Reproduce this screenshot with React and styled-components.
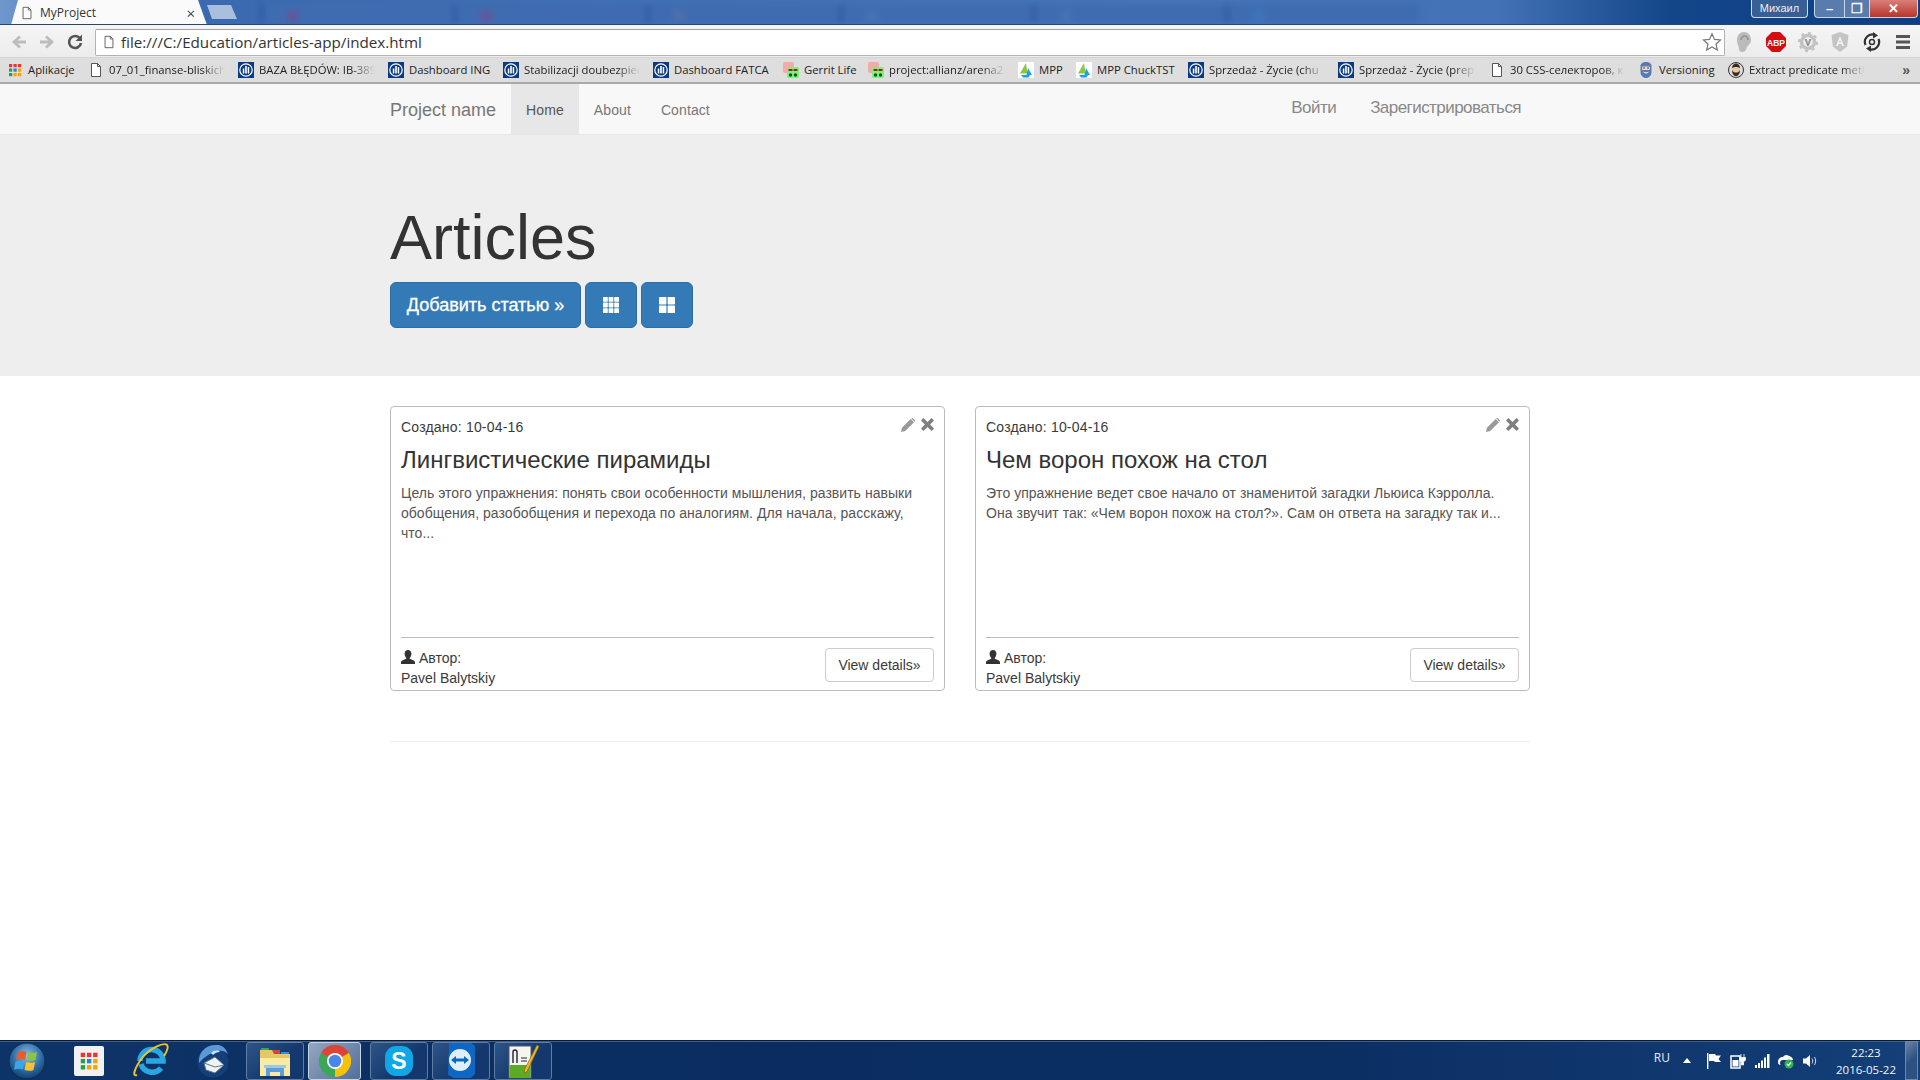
import React from "react"
import styled, { createGlobalStyle } from 'styled-components'

const GlobalStyle = createGlobalStyle`
  html, body { margin: 0; height: 100%; overflow: hidden; background: #fff; }
  body {
    font-family: "Liberation Sans", Arial, sans-serif;
    font-size: 14px;
    line-height: 20px;
    color: #3a3a3a;
  }
  * { box-sizing: border-box; }
`

const UI_FONT = `"Open Sans", "Noto Sans", sans-serif`

/* ---------- glyphs ---------- */

const Th = () => (
  <svg width="16" height="16" viewBox="0 0 16 16" fill="#fff">
    {[0, 1, 2].map(r => [0, 1, 2].map(c => (
      <rect key={`${r}${c}`} x={c * 5.6} y={r * 5.6} width="4.8" height="4.8" rx="0.6" />
    )))}
  </svg>
)

const ThLarge = () => (
  <svg width="16" height="16" viewBox="0 0 16 16" fill="#fff">
    <rect x="0" y="0" width="7.4" height="7.4" rx="0.6" />
    <rect x="8.6" y="0" width="7.4" height="7.4" rx="0.6" />
    <rect x="0" y="8.6" width="7.4" height="7.4" rx="0.6" />
    <rect x="8.6" y="8.6" width="7.4" height="7.4" rx="0.6" />
  </svg>
)

const Pencil = () => (
  <svg width="14" height="14" viewBox="0 0 14 14" fill="#999">
    <path d="M0 14l.9-4.2L9.7 1l3.3 3.3-8.8 8.8zM10.5.3c.5-.4 1.1-.4 1.5 0l1.7 1.7c.4.4.4 1 0 1.5l-.2.2L10.3.5z" />
  </svg>
)

const Cross = () => (
  <svg width="13" height="13" viewBox="0 0 13 13" fill="#808080">
    <path d="M3 .4L6.5 3.9 10 .4c.3-.3.8-.3 1.1 0l1.5 1.5c.3.3.3.8 0 1.1L9.1 6.5l3.5 3.5c.3.3.3.8 0 1.1l-1.5 1.5c-.3.3-.8.3-1.1 0L6.5 9.1 3 12.6c-.3.3-.8.3-1.1 0L.4 11.1c-.3-.3-.3-.8 0-1.1l3.5-3.5L.4 3c-.3-.3-.3-.8 0-1.1L1.9.4C2.2.1 2.7.1 3 .4z" />
  </svg>
)

const UserGlyph = () => (
  <svg width="14" height="14" viewBox="0 0 14 14" fill="#333">
    <path d="M7 0c2.1 0 3.4 1.5 3.4 3.7 0 1.6-.7 3.2-1.5 4.1-.3.4-.2 1 .3 1.2 1.9.8 4.8 1.5 4.8 3.4V14H0v-1.6c0-1.9 2.9-2.6 4.8-3.4.5-.2.6-.8.3-1.2-.8-.9-1.5-2.5-1.5-4.1C3.6 1.5 4.9 0 7 0z" />
  </svg>
)

const PageIcon = ({ size = 16 }) => (
  <svg width={size} height={size} viewBox="0 0 16 16">
    <path d="M3.5 1.5h6l3 3v10h-9z" fill="#fff" stroke="#555" />
    <path d="M9.5 1.5v3h3" fill="none" stroke="#555" />
  </svg>
)

const Allianz = () => (
  <svg width="16" height="16" viewBox="0 0 16 16">
    <rect width="16" height="16" fill="#0a3a82" />
    <circle cx="8" cy="8" r="6.2" fill="none" stroke="#fff" strokeWidth="1.2" />
    <rect x="4.8" y="6.5" width="1.5" height="5" fill="#fff" />
    <rect x="7.2" y="4" width="1.6" height="7.5" fill="#fff" />
    <rect x="9.7" y="5" width="1.5" height="6.5" fill="#fff" />
  </svg>
)

const Gerrit = () => (
  <svg width="16" height="16" viewBox="0 0 16 16">
    <rect x="0" y="0" width="11" height="11" rx="2" fill="#f7a8a8" />
    <rect x="4" y="5" width="12" height="11" rx="1.5" fill="#7df07d" />
    <rect x="5.5" y="7" width="4" height="2" fill="#a32020" />
    <rect x="10.5" y="7" width="4" height="2" fill="#a32020" />
    <circle cx="7.5" cy="13" r="1.7" fill="#0c5a0c" />
    <circle cx="12.5" cy="13" r="1.7" fill="#0c5a0c" />
  </svg>
)

const Mpp = () => (
  <svg width="16" height="16" viewBox="0 0 16 16">
    <rect width="16" height="16" fill="#fff" />
    <path d="M8 1l1.5 10.5H2z" fill="#8cc63f" />
    <path d="M10 6l4 7-5.5 0z" fill="#1ba1e2" />
    <path d="M3 13h9l-1.5 2.5H5z" fill="#1ba1e2" />
  </svg>
)

const Bearded = () => (
  <svg width="16" height="16" viewBox="0 0 16 16">
    <path d="M2.5 4C2.5 1.5 5 0 8 0s5.5 1.5 5.500 4v6c0 3.500-2.500 6-5.500 6s-5.500-2.500-5.500-6z" fill="#5a78b5" />
    <rect x="4" y="4.5" width="8" height="3.5" rx="1" fill="#f0d9c0" />
    <circle cx="6" cy="6" r=".8" fill="#234" />
    <circle cx="10" cy="6" r=".8" fill="#234" />
    <path d="M5.5 10c1.5 1.2 3.5 1.2 5 0" stroke="#fff" fill="none" />
  </svg>
)

const Face = () => (
  <svg width="16" height="16" viewBox="0 0 16 16">
    <circle cx="8" cy="8" r="7.5" fill="#ddd" stroke="#333" />
    <ellipse cx="8" cy="7" rx="3.8" ry="4.2" fill="#e8c9a8" />
    <path d="M4 8c0 4 2 6 4 6s4-2 4-6c-1 2-2 2.5-4 2.5S5 10 4 8z" fill="#3a2a20" />
    <path d="M4 6c0-3 2-4.500 4-4.500S12 3 12 6C10 4.500 6 4.500 4 6z" fill="#3a2a20" />
  </svg>
)

const AppsGrid = ({ size = 16 }) => {
  const colours = ['#e33', '#e33', '#e33', '#2a9d4a', '#2b7fd6', '#f5a300', '#2a9d4a', '#f5a300', '#f5a300']
  return (
    <svg width={size} height={size} viewBox="0 0 16 16">
      {colours.map((c, i) => (
        <rect key={i} x={2 + (i % 3) * 4.5} y={2 + Math.floor(i / 3) * 4.5} width="3.2" height="3.2" fill={c} />
      ))}
    </svg>
  )
}

const bookmarkIcons = { apps: AppsGrid, page: PageIcon, allianz: Allianz, gerrit: Gerrit, mpp: Mpp, beard: Bearded, face: Face }

const Back = ({ colour }) => (
  <svg width="18" height="18" viewBox="0 0 18 18" fill={colour}>
    <path d="M9 2.5l2 2L7.500 7.500H16v3H7.500l3.500 3-2 2L2 9z" />
  </svg>
)

const Forward = ({ colour }) => (
  <svg width="18" height="18" viewBox="0 0 18 18" fill={colour}>
    <path d="M9 2.5l-2 2 3.500 3H2v3h8.500L7 13.500l2 2L16 9z" />
  </svg>
)

const Reload = () => (
  <svg width="18" height="18" viewBox="0 0 18 18">
    <path d="M14 5.500A6 6 0 1 0 15 10" fill="none" stroke="#555" strokeWidth="2.6" />
    <path d="M16 1.500v6.500H9.500z" fill="#555" />
  </svg>
)

const Star = () => (
  <svg width="20" height="20" viewBox="0 0 20 20">
    <path d="M10 1.800l2.500 5.600 6 .6-4.500 4 1.300 6L10 15l-5.300 3 1.300-6-4.500-4 6-.6z" fill="#fff" stroke="#777" strokeWidth="1.2" />
  </svg>
)

const Ear = () => (
  <svg width="20" height="22" viewBox="0 0 20 22">
    <path d="M3 9c0-5 3-8 7-8s7 3 7 8c0 4-3 5-4 7-1 3-2 5-5 5-2 0-3-1-3-3 0-4-2-4-2-9z" fill="#bbb" />
    <path d="M7 9c0-2 1.500-4 3.500-4S14 7 14 9" fill="none" stroke="#8d8d8d" strokeWidth="1.5" />
  </svg>
)

const Abp = () => (
  <svg width="20" height="20" viewBox="0 0 20 20">
    <path d="M6 0h8l6 6v8l-6 6H6l-6-6V6z" fill="#d40d12" />
    <text x="10" y="13.5" textAnchor="middle" fontFamily="Liberation Sans" fontWeight="700" fontSize="8.5" fill="#fff">ABP</text>
  </svg>
)

const Gear = () => (
  <svg width="20" height="20" viewBox="0 0 20 20">
    <circle cx="10" cy="10" r="6.5" fill="none" stroke="#c2c2c2" strokeWidth="3.5" />
    <circle cx="10" cy="10" r="9" fill="none" stroke="#c2c2c2" strokeWidth="2" strokeDasharray="3 4" />
    <path d="M6.500 7h2.200l1.300 4 1.300-4h2.200L10.800 14H9.200z" fill="#999" />
  </svg>
)

const Shield = () => (
  <svg width="20" height="20" viewBox="0 0 20 20">
    <path d="M10 0l8.500 3-1.300 11.500L10 20l-7.200-5.500L1.500 3z" fill="#c4c4c4" />
    <path d="M10 4L6 14h1.800l.8-2h2.800l.8 2H14zM9.200 10.500L10 8l.8 2.500z" fill="#f3f3f3" />
  </svg>
)

const SyncIcon = () => (
  <svg width="20" height="20" viewBox="0 0 20 20">
    <path d="M3.500 13A7.500 7.500 0 0 1 13 3" fill="none" stroke="#333" strokeWidth="2.2" />
    <path d="M16.500 7A7.500 7.500 0 0 1 7 17" fill="none" stroke="#333" strokeWidth="2.2" />
    <path d="M11 0l5 3.500-5 3zM9 20l-5-3.500 5-3z" fill="#333" />
    <circle cx="10" cy="10" r="2.5" fill="none" stroke="#333" strokeWidth="1.5" />
  </svg>
)

const Menu = () => (
  <svg width="16" height="16" viewBox="0 0 16 16" fill="#555">
    <rect y="1" width="14" height="3" />
    <rect y="6.5" width="14" height="3" />
    <rect y="12" width="14" height="3" />
  </svg>
)

/* taskbar drawings */

const StartOrb = () => (
  <svg width="38" height="38" viewBox="0 0 38 38">
    <defs>
      <radialGradient id="orb" cx="50%" cy="35%" r="65%">
        <stop offset="0" stopColor="#8fc4e8" />
        <stop offset=".6" stopColor="#2f6ea8" />
        <stop offset="1" stopColor="#123f70" />
      </radialGradient>
    </defs>
    <circle cx="19" cy="19" r="18" fill="url(#orb)" stroke="#0d2b50" />
    <path d="M10 10c3-1.500 5-1 8.500 0l-1.500 8c-3-1-5.500-1.500-9-.2z" fill="#ea5a2b" />
    <path d="M20 10.500c3 1 5 1 9-.4L27.500 18c-3 1.200-5.500 1-9 0z" fill="#8cc53f" />
    <path d="M7.500 19.500c3-1.300 5.500-.8 9 .2L15 27.500c-3-1-5.500-1.200-9 .2z" fill="#3ba5e6" />
    <path d="M18 20c3 1 5.500 1.200 9 0L25.500 28c-3 1.200-5.500 1-9 0z" fill="#fbc02d" />
  </svg>
)

const IeIcon = () => (
  <svg width="38" height="36" viewBox="0 0 38 36">
    <path d="M8 18a11.500 11.500 0 0 1 23 0H14M14 18h12M29 25a11.500 11.500 0 0 1-20-4" fill="none" stroke="#2ba6e3" strokeWidth="5.5" />
    <path d="M5 32C0 34 2 26 10 15 18 5 32-1 35 2c2 2.500-.5 7-3 11" fill="none" stroke="#eec32f" strokeWidth="2" />
  </svg>
)

const BirdIcon = () => (
  <svg width="34" height="36" viewBox="0 0 34 36">
    <circle cx="17" cy="19" r="15.5" fill="#153f78" />
    <path d="M3 20C2 9 10 1 22 2c5 .5 8 4 10 9-3-3-6-4-9-3-7 1-14 5-20 12z" fill="#5b9ad6" />
    <path d="M15 10c3-3 7-3 9-1-3 0-5 1-7 3z" fill="#cfe3f5" />
    <path d="M8 20l11-6 9 8-9 8-9-3z" fill="#eef2f6" stroke="#5f748c" />
    <path d="M8 20l11 4 9-2" fill="none" stroke="#5f748c" />
  </svg>
)

const FolderIcon = () => (
  <svg width="32" height="34" viewBox="0 0 32 34">
    <rect x="2" y="4" width="8" height="4" fill="#3ea34a" />
    <rect x="13" y="6" width="8" height="4" fill="#d5443a" />
    <rect x="22" y="8" width="8" height="4" fill="#3a8ed5" />
    <path d="M1 6h12l2 4h16v22H1z" fill="#e6c766" />
    <path d="M1 14h30v18H1z" fill="#fbeaa4" />
    <path d="M7 24h18v8h-4v-4H11v4H7z" fill="#5e9ed6" />
    <path d="M5 21h22v3H5z" fill="#9cc8ea" />
  </svg>
)

const ChromeIcon = () => (
  <svg width="32" height="32" viewBox="0 0 32 32">
    <path d="M16 16L2.140 8A16 16 0 0 1 29.860 8z" fill="#db4437" />
    <path d="M16 16L29.860 8A16 16 0 0 1 16 32z" fill="#f4c20d" />
    <path d="M16 16L16 32A16 16 0 0 1 2.140 8z" fill="#3aa757" />
    <circle cx="16" cy="16" r="8" fill="#fff" />
    <circle cx="16" cy="16" r="6.3" fill="#4a86e8" />
  </svg>
)

const SkypeIcon = () => (
  <svg width="30" height="34" viewBox="0 0 30 34">
    <rect x="1" y="2" width="28" height="30" rx="11" fill="#10a7e6" />
    <text x="15" y="25" textAnchor="middle" fontFamily="Liberation Sans" fontWeight="700" fontSize="23" fill="#fff">S</text>
  </svg>
)

const ViewerIcon = () => (
  <svg width="30" height="36" viewBox="0 0 30 36">
    <path d="M3 0h22l4 3v28l-4 4H8l-6-3z" fill="#0e67c4" />
    <circle cx="14" cy="17" r="11" fill="#dfeefb" />
    <path d="M5 17l5-4v2.500h8V13l5 4-5 4v-2.500h-8V21z" fill="#0e67c4" />
  </svg>
)

const NotepadIcon = () => (
  <svg width="34" height="36" viewBox="0 0 34 36">
    <rect x="3" y="3" width="22" height="32" fill="#f5f5f0" stroke="#556" />
    <rect x="3.5" y="22" width="21" height="13" fill="#5caa25" />
    <path d="M7 9v11M11 9v11M7 9a2 2 0 0 1 4 0" fill="none" stroke="#223" strokeWidth="1.4" />
    <path d="M15 15h6M15 18h6" stroke="#223" />
    <path d="M31 2l2 1.500-12 25-3 2 .5-4z" fill="#f0b429" stroke="#7a5a10" strokeWidth=".6" />
  </svg>
)

const TrayFlag = () => (
  <svg width="14" height="16" viewBox="0 0 14 16" fill="#fff">
    <rect x="0" y="0" width="1.4" height="16" />
    <path d="M2 1h6l1 1.500h5L11.500 6 14 9H8L7 8H2z" />
  </svg>
)

const TrayPower = () => (
  <svg width="16" height="16" viewBox="0 0 16 16">
    <rect x="1" y="3" width="9" height="12" fill="none" stroke="#fff" strokeWidth="1.5" />
    <rect x="2.5" y="7" width="6" height="6.500" fill="#fff" />
    <path d="M11 1v3M14 1v3M9.500 4.500h6v2.500l-2 2v3h-2V9l-2-2z" fill="#fff" stroke="#fff" strokeWidth=".8" />
  </svg>
)

const TraySignal = () => (
  <svg width="15" height="14" viewBox="0 0 15 14" fill="#fff">
    <rect x="0" y="11" width="2" height="3" />
    <rect x="3" y="9" width="2" height="5" />
    <rect x="6" y="6.5" width="2" height="7.500" />
    <rect x="9" y="3.5" width="2" height="10.500" />
    <rect x="12" y="0" width="2.5" height="14" />
  </svg>
)

const TrayCloud = () => (
  <svg width="18" height="16" viewBox="0 0 18 16">
    <path d="M1 9c0-3 2-5 5-5 1-2 4-3 6-1 2 .5 4 2 4 4H6c-2 0-3 1-3 3 0 1 .5 2 1 2-2 0-3-1-3-3z" fill="#fff" />
    <circle cx="12" cy="11" r="4.5" fill="#2eb34a" />
    <path d="M10 11l1.500 1.500 2.500-3" fill="none" stroke="#fff" strokeWidth="1.3" />
  </svg>
)

const TraySound = () => (
  <svg width="15" height="14" viewBox="0 0 15 14" fill="none">
    <path d="M0 4.500h3L7 1v12L3 9.500H0z" fill="#fff" />
    <path d="M9 4.500c1 1.500 1 3.500 0 5M11.500 3c1.500 2.500 1.500 5.500 0 8" stroke="#cfd8e3" />
  </svg>
)

/* ---------- browser chrome ---------- */

const TabStrip = styled.div`
  display: flex;
  align-items: flex-end;
  height: 25px;
  padding-left: 11px;
  overflow: hidden;
  background: linear-gradient(90deg, #6f98cd 0, #3a68ad 6%, #3f6fb5 30%, #4575b9 60%, #4373b6 78%, #134589 87%, #0d3f85 100%);
  border-bottom: 1px solid #24466f;
`

const ActiveTab = styled.div`
  display: flex;
  align-items: center;
  flex: 0 0 196px;
  height: 25px;
  margin-bottom: -1px;
  padding: 0 8px 0 9px;
  background: #fafafa;
  clip-path: polygon(0 100%, 7px 0, 187px 0, 196px 100%);
  font: 12px ${UI_FONT};
  color: #333;
`

const TabTitle = styled.span`
  margin-left: 6px;
  flex: 1;
`

const TabClose = styled.span`
  font-size: 15px;
  color: #444;
  margin-right: 4px;
`

const NewTab = styled.div`
  flex: 0 0 30px;
  height: 14px;
  margin: 0 0 5px 0;
  background: #a9bfdd;
  clip-path: polygon(0 0, 24px 0, 30px 100%, 5px 100%);
`

const BlurRow = styled.div`
  display: flex;
  flex: 1;
  align-self: stretch;
  padding: 4px 0 0 24px;
  filter: blur(3px);
`

const GhostTab = styled.div`
  position: relative;
  flex: 0 0 193px;
  height: 20px;
  background: #3f6cb0;
  border-left: 2px solid #1f4c90;
  &:before {
    content: '';
    position: absolute;
    left: 24px;
    top: 6px;
    width: 12px;
    height: 12px;
    background: ${p => p.$dot};
    opacity: .7;
    border-radius: 50%;
  }
`

const WindowControls = styled.div`
  display: flex;
  align-self: flex-start;
  position: absolute;
  right: 2px;
  top: 0;
  height: 18px;
`

const UserBadge = styled.div`
  width: 57px;
  margin-right: 6px;
  border: 1px solid #d0dae8;
  border-top: 0;
  border-radius: 0 0 4px 4px;
  background: rgba(90, 120, 160, .55);
  font: 11px/16px "Liberation Sans", sans-serif;
  color: #eee;
  text-align: center;
`

const WinButton = styled.div`
  display: flex;
  align-items: center;
  justify-content: center;
  width: ${p => p.$w}px;
  background: ${p => p.$bg};
  border: 1px solid #c9d5e6;
  border-top: 0;
  border-left-width: ${p => (p.$first ? 1 : 0)}px;
  border-radius: ${p => (p.$first ? '0 0 0 4px' : p.$last ? '0 0 4px 0' : 0)};
  color: #fff;
  font: 700 13px "Liberation Sans", sans-serif;
`

const Toolbar = styled.div`
  display: flex;
  align-items: center;
  height: 32px;
  padding: 2px 0 0 5px;
  background: linear-gradient(#f5f5f5, #ececec);
`

const NavIcon = styled.div`
  display: flex;
  flex: 0 0 ${p => p.$w || 28}px;
  justify-content: center;
`

const Omnibox = styled.div`
  display: flex;
  align-items: center;
  flex: 0 0 1630px;
  height: 27px;
  margin-left: 6px;
  padding: 0 2px 0 6px;
  background: #fff;
  border: 1px solid #b3b3b3;
  border-top-color: #a0a0a0;
  border-radius: 2px;
`

const Url = styled.div`
  flex: 1;
  margin-left: 5px;
  font: 15.2px ${UI_FONT};
  color: #333;
`

const ExtIcons = styled.div`
  display: flex;
  align-items: center;
  margin-left: 3px;
`

const ExtIcon = styled.div`
  display: flex;
  flex: 0 0 32px;
  justify-content: center;
`

const BookmarkBar = styled.div`
  display: flex;
  align-items: center;
  gap: 13px;
  height: 27px;
  padding: 0 10px 0 7px;
  background: #dedede;
  border-top: 1px solid #d4d4d4;
  border-bottom: 2px solid #a9a9a9;
`

const Bookmark = styled.div`
  display: flex;
  align-items: center;
  gap: 5px;
`

const BookmarkLabel = styled.span`
  width: ${p => p.$w}px;
  white-space: nowrap;
  overflow: ${p => (p.$fade ? 'hidden' : 'visible')};
  font: 11.3px/16px ${UI_FONT};
  color: #222;
  mask-image: ${p => (p.$fade ? 'linear-gradient(90deg, #000 80%, transparent)' : 'none')};
`

const MoreBookmarks = styled.span`
  margin-left: auto;
  font: 700 14px "Liberation Sans", sans-serif;
  color: #555;
`

const BrowserChrome = () => (
  <>
    <TabStrip>
      <ActiveTab>
        <PageIcon size={14} />
        <TabTitle>MyProject</TabTitle>
        <TabClose>×</TabClose>
      </ActiveTab>
      <NewTab />
      <BlurRow>
        {['#7a4a90', '#7a4a90', '#5a72a8', '#4a78b8', '#4a78b8', '#3f7cc0'].map((c, i) => <GhostTab key={i} $dot={c} />)}
      </BlurRow>
      <WindowControls>
        <UserBadge>Михаил</UserBadge>
        <WinButton $first $w={31} $bg="rgba(120,150,190,.7)">–</WinButton>
        <WinButton $w={25} $bg="rgba(120,150,190,.7)">❐</WinButton>
        <WinButton $last $w={48} $bg="linear-gradient(#d9807a, #b8342c)">✕</WinButton>
      </WindowControls>
    </TabStrip>
    <Toolbar>
      <NavIcon><Back colour="#bcbcbc" /></NavIcon>
      <NavIcon><Forward colour="#bcbcbc" /></NavIcon>
      <NavIcon><Reload /></NavIcon>
      <Omnibox>
        <PageIcon size={14} />
        <Url>file:///C:/Education/articles-app/index.html</Url>
        <Star />
      </Omnibox>
      <ExtIcons>
        <ExtIcon><Ear /></ExtIcon>
        <ExtIcon><Abp /></ExtIcon>
        <ExtIcon><Gear /></ExtIcon>
        <ExtIcon><Shield /></ExtIcon>
        <ExtIcon><SyncIcon /></ExtIcon>
        <ExtIcon><Menu /></ExtIcon>
      </ExtIcons>
    </Toolbar>
    <BookmarkBar>
      {bookmarks.map(b => {
        const Icon = bookmarkIcons[b.icon]
        return (
          <Bookmark key={b.label}>
            <Icon />
            <BookmarkLabel $w={b.w} $fade={b.fade}>{b.label}</BookmarkLabel>
          </Bookmark>
        )
      })}
      <MoreBookmarks>»</MoreBookmarks>
    </BookmarkBar>
  </>
)

const bookmarks = [
  { icon: 'apps', label: 'Aplikacje', w: 47 },
  { icon: 'page', label: '07_01_finanse-bliskich', w: 116, fade: true },
  { icon: 'allianz', label: 'BAZA BŁĘDÓW: IB-389', w: 116, fade: true },
  { icon: 'allianz', label: 'Dashboard ING', w: 81 },
  { icon: 'allianz', label: 'Stabilizacji doubezpiec', w: 116, fade: true },
  { icon: 'allianz', label: 'Dashboard FATCA', w: 96 },
  { icon: 'gerrit', label: 'Gerrit Life', w: 51 },
  { icon: 'gerrit', label: 'project:allianz/arena2/', w: 116, fade: true },
  { icon: 'mpp', label: 'MPP', w: 24 },
  { icon: 'mpp', label: 'MPP ChuckTST', w: 78 },
  { icon: 'allianz', label: 'Sprzedaż - Życie (chu', w: 116, fade: true },
  { icon: 'allianz', label: 'Sprzedaż - Życie (prep', w: 117, fade: true },
  { icon: 'page', label: '30 CSS-селекторов, к', w: 115, fade: true },
  { icon: 'beard', label: 'Versioning', w: 56 },
  { icon: 'face', label: 'Extract predicate meth', w: 116, fade: true },
]

/* ---------- page ---------- */

const Screen = styled.div`
  position: relative;
  display: flex;
  flex-direction: column;
  height: 100vh;
`

const Page = styled.main`
  flex: 1;
`

const Navbar = styled.nav`
  height: 51px;
  background: #f8f8f8;
  border-bottom: 1px solid #e7e7e7;
`

const Container = styled.div`
  display: ${p => (p.$flex ? 'flex' : 'block')};
  width: 1140px;
  margin: 0 auto;
`

const Brand = styled.a`
  padding: 16px 15px 14px 0;
  font-size: 18px;
  line-height: 20px;
  color: #777;
`

const NavLink = styled.a`
  padding: 16px 15px 14px;
  height: 50px;
  letter-spacing: .1px;
  background: ${p => (p.$active ? '#e7e7e7' : 'transparent')};
  color: ${p => (p.$active ? '#555' : '#777')};
`

const AuthLinks = styled.div`
  display: flex;
  gap: 34px;
  margin-left: auto;
  padding: 14px 9px 0 0;
`

const AuthLink = styled.a`
  font-size: 17px;
  line-height: 20px;
  letter-spacing: -0.55px;
  color: #888;
`

const Jumbotron = styled.section`
  height: 241px;
  padding-top: 48px;
  margin-bottom: 30px;
  background: #eee;
`

const Title = styled.h1`
  margin: 20px 0 10px;
  font-size: 63px;
  font-weight: 500;
  line-height: 69px;
  color: #333;
`

const Actions = styled.div`
  display: flex;
  gap: 4px;
`

const PrimaryButton = styled.button`
  display: flex;
  align-items: center;
  justify-content: center;
  height: 46px;
  width: ${p => p.$w}px;
  padding: 0;
  font: 18px "Liberation Sans", sans-serif;
  -webkit-text-stroke: .3px #fff;
  color: #fff;
  background: #337ab7;
  border: 1px solid #2e6da4;
  border-radius: 6px;
`

const CardGrid = styled.div`
  display: grid;
  grid-template-columns: 555px 555px;
  gap: 30px;
`

const Card = styled.article`
  position: relative;
  display: flex;
  flex-direction: column;
  height: 285px;
  padding: 10px 10px 2px;
  border: 1px solid #bbb;
  border-radius: 4px;
`

const CardTools = styled.div`
  position: absolute;
  top: 11px;
  right: 10px;
  display: flex;
  gap: 6px;
`

const Created = styled.div`
  letter-spacing: .2px;
`

const CardTitle = styled.h3`
  margin: 10px 0;
  font-size: 24px;
  font-weight: 500;
  line-height: 26px;
  color: #333;
`

const Excerpt = styled.p`
  flex: 1;
  margin: 0;
  letter-spacing: .035px;
  color: #555;
`

const CardFooter = styled.div`
  display: flex;
  align-items: flex-start;
  justify-content: space-between;
  padding-top: 10px;
  border-top: 1px solid #bbb;
`

const Author = styled.div`
  svg { margin-right: 4px; vertical-align: -1px; }
`

const DetailsButton = styled.button`
  width: 109px;
  height: 34px;
  padding: 0;
  font: 14px "Liberation Sans", sans-serif;
  color: #3a3a3a;
  background: #fff;
  border: 1px solid #ccc;
  border-radius: 4px;
`

const Divider = styled.hr`
  margin: 50px 0 0;
  border: 0;
  border-top: 1px solid #eee;
`

const articles = [
  {
    title: 'Лингвистические пирамиды',
    text: 'Цель этого упражнения: понять свои особенности мышления, развить навыки обобщения, разобобщения и перехода по аналогиям. Для начала, расскажу, что...',
  },
  {
    title: 'Чем ворон похож на стол',
    text: 'Это упражнение ведет свое начало от знаменитой загадки Льюиса Кэрролла. Она звучит так: «Чем ворон похож на стол?». Сам он ответа на загадку так и...',
  },
]

const ArticleCard = ({ title, text }) => (
  <Card>
    <CardTools><Pencil /><Cross /></CardTools>
    <Created>Создано: 10-04-16</Created>
    <CardTitle>{title}</CardTitle>
    <Excerpt>{text}</Excerpt>
    <CardFooter>
      <Author>
        <UserGlyph />Автор:<br />Pavel Balytskiy
      </Author>
      <DetailsButton>View details»</DetailsButton>
    </CardFooter>
  </Card>
)

/* ---------- taskbar ---------- */

const Taskbar = styled.footer`
  display: flex;
  align-items: center;
  flex: 0 0 40px;
  background: linear-gradient(90deg, #0d3468 0, #0a2c5e 40%, #0b2f63 70%, #143f78 100%);
  border-top: 1px solid #0b1b33;
  box-shadow: inset 0 1px 0 #3b5f8e;
`

const StartSlot = styled.div`
  display: flex;
  justify-content: center;
  flex: 0 0 54px;
  margin-right: 4px;
`

const Pinned = styled.div`
  display: flex;
  justify-content: center;
  flex: 0 0 62px;
`

const AppTile = styled.div`
  display: flex;
  align-items: center;
  justify-content: center;
  width: 30px;
  height: 30px;
  background: #f1f1f1;
  border-radius: 2px;
`

const TaskButtons = styled.div`
  display: flex;
  gap: 4px;
  margin-left: 2px;
`

const TaskButton = styled.div`
  display: flex;
  align-items: center;
  justify-content: center;
  width: ${p => p.$w || 58}px;
  height: 38px;
  margin-right: ${p => p.$stack || 0}px;
  border: 1px solid ${p => (p.$active ? '#c8d3e2' : '#5f7da3')};
  border-radius: 3px;
  background: ${p => (p.$active
    ? 'linear-gradient(135deg, #95a6bf, #51709c)'
    : 'linear-gradient(135deg, #2e5587, #14386d 60%)')};
`

const Tray = styled.div`
  display: flex;
  align-items: center;
  margin-left: auto;
  height: 100%;
  color: #fff;
`

const Lang = styled.span`
  margin-right: 13px;
  font: 12px ${UI_FONT};
  color: #e4ebf4;
  transform: translateY(-3px);
`

const TrayArrow = styled.span`
  width: 0;
  height: 0;
  margin-right: 11px;
  border: 4px solid transparent;
  border-top: 0;
  border-bottom: 5px solid #fff;
`

const TraySlot = styled.div`
  display: flex;
  justify-content: center;
  flex: 0 0 24px;
`

const Clock = styled.div`
  width: 66px;
  margin: 0 6px 0 11px;
  text-align: center;
  font: 11.5px/17px ${UI_FONT};
  color: #f2f5f9;
`

const ShowDesktop = styled.div`
  flex: 0 0 13px;
  height: 100%;
  margin-right: 2px;
  border: 1px solid #6f88a8;
  background: linear-gradient(135deg, #6d84a3, #2d5281 50%);
`

const App = () => (
  <Screen>
    <GlobalStyle />
    <BrowserChrome />
    <Page>
      <Navbar>
        <Container $flex>
          <Brand>Project name</Brand>
          <NavLink $active>Home</NavLink>
          <NavLink>About</NavLink>
          <NavLink>Contact</NavLink>
          <AuthLinks>
            <AuthLink>Войти</AuthLink>
            <AuthLink>Зарегистрироваться</AuthLink>
          </AuthLinks>
        </Container>
      </Navbar>
      <Jumbotron>
        <Container>
          <Title>Articles</Title>
          <Actions>
            <PrimaryButton $w={191}>Добавить статью »</PrimaryButton>
            <PrimaryButton $w={52}><Th /></PrimaryButton>
            <PrimaryButton $w={52}><ThLarge /></PrimaryButton>
          </Actions>
        </Container>
      </Jumbotron>
      <Container>
        <CardGrid>
          {articles.map(a => <ArticleCard key={a.title} {...a} />)}
        </CardGrid>
        <Divider />
      </Container>
    </Page>
    <Taskbar>
      <StartSlot><StartOrb /></StartSlot>
      <Pinned><AppTile><AppsGrid size={22} /></AppTile></Pinned>
      <Pinned><IeIcon /></Pinned>
      <Pinned><BirdIcon /></Pinned>
      <TaskButtons>
        <TaskButton><FolderIcon /></TaskButton>
        <TaskButton $active $w={53} $stack={5}><ChromeIcon /></TaskButton>
        <TaskButton><SkypeIcon /></TaskButton>
        <TaskButton><ViewerIcon /></TaskButton>
        <TaskButton><NotepadIcon /></TaskButton>
      </TaskButtons>
      <Tray>
        <Lang>RU</Lang>
        <TrayArrow />
        <TraySlot><TrayFlag /></TraySlot>
        <TraySlot><TrayPower /></TraySlot>
        <TraySlot><TraySignal /></TraySlot>
        <TraySlot><TrayCloud /></TraySlot>
        <TraySlot><TraySound /></TraySlot>
        <Clock>22:23<br />2016-05-22</Clock>
        <ShowDesktop />
      </Tray>
    </Taskbar>
  </Screen>
)

export default App
